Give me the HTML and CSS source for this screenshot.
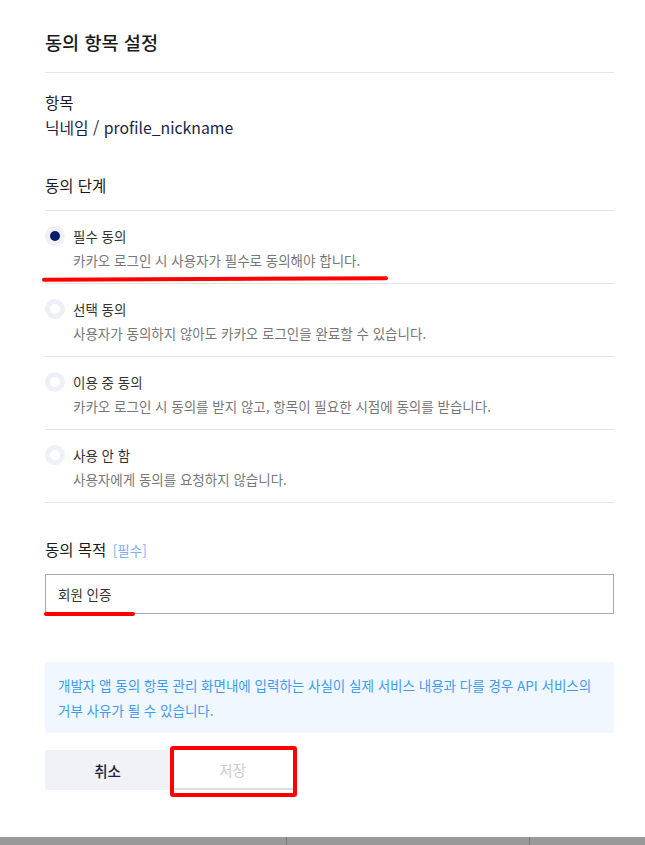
FILE: index.html
```html
<!DOCTYPE html>
<html lang="ko">
<head>
<meta charset="utf-8">
<title>동의 항목 설정</title>
<link rel="stylesheet" href="styles.css">
</head>
<body>
<div class="page">
  <header class="header">
    <h1 class="title">동의 항목 설정</h1>
  </header>

  <section class="item">
    <div class="label">항목</div>
    <div class="value">닉네임 / profile_nickname</div>
  </section>

  <section class="step">
    <div class="label step-title">동의 단계</div>
    <ul class="options">
      <li class="option">
        <span class="radio checked"></span>
        <div class="option-text">
          <div class="option-label">필수 동의</div>
          <div class="option-desc">카카오 로그인 시 사용자가 필수로 동의해야 합니다.</div>
        </div>
        <span class="mark mark-row"></span>
      </li>
      <li class="option">
        <span class="radio"></span>
        <div class="option-text">
          <div class="option-label">선택 동의</div>
          <div class="option-desc">사용자가 동의하지 않아도 카카오 로그인을 완료할 수 있습니다.</div>
        </div>
      </li>
      <li class="option">
        <span class="radio"></span>
        <div class="option-text">
          <div class="option-label">이용 중 동의</div>
          <div class="option-desc">카카오 로그인 시 동의를 받지 않고, 항목이 필요한 시점에 동의를 받습니다.</div>
        </div>
      </li>
      <li class="option">
        <span class="radio"></span>
        <div class="option-text">
          <div class="option-label">사용 안 함</div>
          <div class="option-desc">사용자에게 동의를 요청하지 않습니다.</div>
        </div>
      </li>
    </ul>
  </section>

  <section class="purpose">
    <div class="label">동의 목적 <span class="req">[필수]</span></div>
    <div class="input-wrap">
      <div class="input">회원 인증</div>
      <span class="mark mark-input"></span>
    </div>
  </section>

  <div class="notice">개발자 앱 동의 항목 관리 화면내에 입력하는 사실이 실제 서비스 내용과 다를 경우 API 서비스의 거부 사유가 될 수 있습니다.</div>

  <div class="buttons">
    <button class="btn btn-cancel">취소</button>
    <div class="save-wrap">
      <button class="btn btn-save">저장</button>
      <span class="mark-box"></span>
    </div>
  </div>
</div>
<div class="bottom-bar">
  <span class="cell c1"></span>
  <span class="cell c2"></span>
  <span class="cell c3"></span>
</div>
</body>
</html>
```

FILE: styles.css
```css
* { box-sizing: border-box; }
html, body {
  margin: 0;
  padding: 0;
  background: #fff;
  font-family: "Noto Sans CJK KR", "Noto Sans", sans-serif;
  color: #1a1a1a;
}
body {
  height: 845px;
  overflow: hidden;
  display: flex;
  flex-direction: column;
}
.page {
  padding: 0 31px 0 45px;
  flex: 1;
}
.header {
  padding-top: 29px;
  padding-bottom: 17px;
  border-bottom: 1px solid #e5e5e5;
}
.title {
  margin: 0;
  font-size: 18.6px;
  font-weight: 500;
  line-height: 26px;
  color: #1a1a1a;
}
.item {
  padding-top: 18px;
}
.label {
  font-size: 15.5px;
  line-height: 22px;
  color: #1a1a1a;
}
.value {
  margin-top: 3px;
  font-size: 15.8px;
  line-height: 24px;
  color: #1b1f44;
}
.step {
  margin-top: 34px;
}
.step-title {
  margin-bottom: 14px;
}
.options {
  list-style: none;
  margin: 0;
  padding: 0;
  border-top: 1px solid #e5e5e5;
}
.option {
  position: relative;
  display: flex;
  align-items: flex-start;
  gap: 8px;
  padding: 15px 0 13px;
  border-bottom: 1px solid #e5e5e5;
}
.radio {
  flex: none;
  width: 20px;
  height: 20px;
  border-radius: 50%;
  background: #eef0f7;
  display: flex;
  align-items: center;
  justify-content: center;
}
.radio::after {
  content: "";
  width: 10px;
  height: 10px;
  border-radius: 50%;
  background: #fff;
}
.radio.checked::after {
  background: #0b1c6b;
}
.option-label {
  font-size: 13.5px;
  line-height: 20px;
  color: #333;
}
.option-desc {
  margin-top: 4px;
  font-size: 13.5px;
  line-height: 20px;
  color: #777;
}
.mark {
  position: absolute;
  background: #ff0000;
  border-radius: 2px;
}
.mark-row {
  left: -3px;
  top: 66px;
  width: 346px;
  height: 4px;
  transform: rotate(-0.25deg);
}
.purpose {
  margin-top: 35px;
}
.req {
  font-size: 13.5px;
  color: #7fb0f5;
  margin-left: 2px;
}
.input-wrap {
  position: relative;
  margin-top: 13px;
}
.input {
  height: 40px;
  border: 1px solid #aaaaaa;
  padding: 0 12px;
  font-size: 13.5px;
  line-height: 38px;
  color: #333;
}
.mark-input {
  left: -1px;
  top: 38px;
  width: 91px;
  height: 4px;
}
.notice {
  margin-top: 48px;
  background: #f0f7ff;
  padding: 11px 13px 10px;
  font-size: 13.5px;
  line-height: 25px;
  color: #3d9bf2;
}
.buttons {
  margin-top: 17px;
  display: flex;
}
.btn {
  height: 40px;
  border: 0;
  font-family: inherit;
  font-size: 14.5px;
  padding: 0;
}
.btn-cancel {
  width: 125px;
  background: #f0f2f7;
  color: #1b1f44;
  font-weight: 500;
}
.save-wrap {
  position: relative;
}
.btn-save {
  width: 125px;
  background: #fff;
  color: #cccccc;
  border-bottom: 2px solid #dedede;
}
.mark-box {
  position: absolute;
  left: 0;
  top: -4px;
  width: 127px;
  height: 51px;
  border: 4px solid #ff0000;
  border-radius: 3px;
}
.bottom-bar {
  flex: none;
  height: 8px;
  display: flex;
  background: #999;
}
.cell { height: 100%; }
.c1 { width: 287px; border-right: 1px solid #7a7a7a; }
.c2 { width: 243px; border-right: 1px solid #7a7a7a; }
.c3 { flex: 1; }
```
